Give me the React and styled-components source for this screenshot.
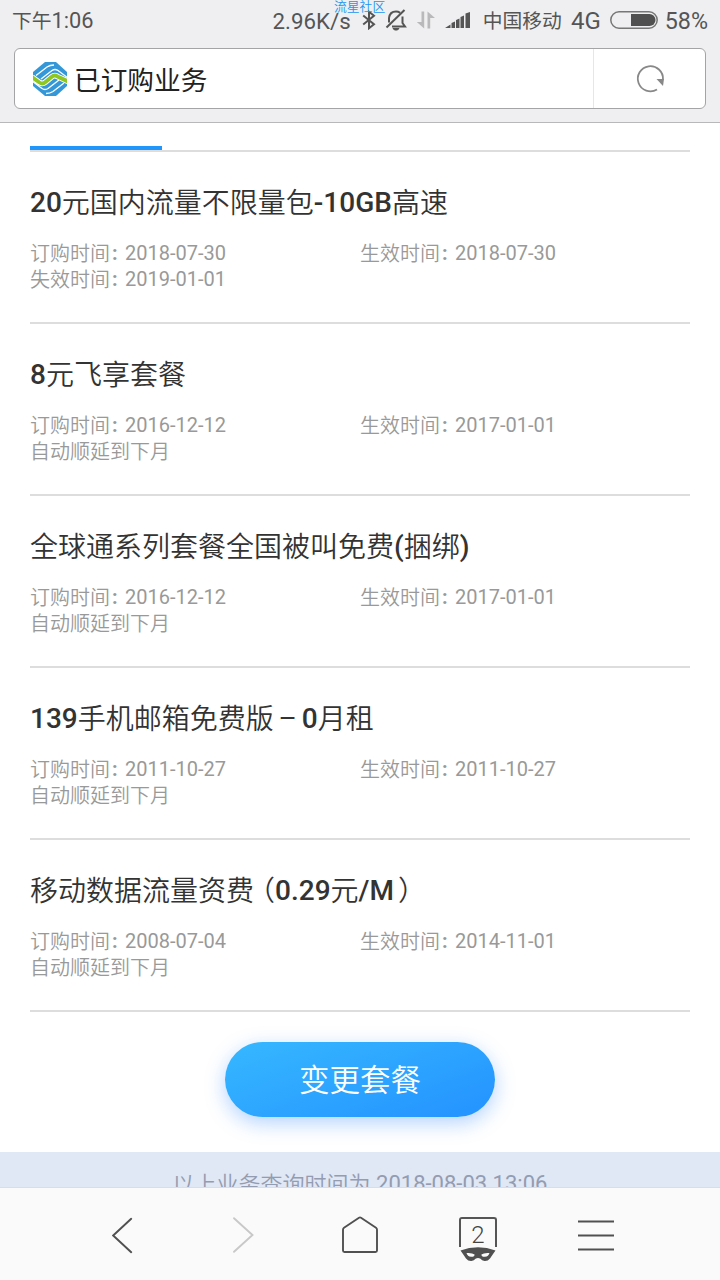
import React from 'react';
import styled, { createGlobalStyle } from 'styled-components';

const CJK = `'Noto Sans CJK SC', sans-serif`;

const subscriptions = [
    { title: '20元国内流量不限量包-10GB高速', ordered: '2018-07-30', effective: '2018-07-30', expires: '2019-01-01' },
    { title: '8元飞享套餐', ordered: '2016-12-12', effective: '2017-01-01' },
    { title: '全球通系列套餐全国被叫免费(捆绑)', ordered: '2016-12-12', effective: '2017-01-01' },
    { title: '139手机邮箱免费版 – 0月租', ordered: '2011-10-27', effective: '2011-10-27' },
    { title: '移动数据流量资费（0.29元/M）', ordered: '2008-07-04', effective: '2014-11-01' },
];

// latin runs are set heavier than the chinese characters around them
function MixedTitle({ text }) {
    return text.split(/([\x21-\x7e]+|[（）]| – )/).filter(Boolean).map((part, i) => {
        if (part === ' – ') return <Dash key={i}>–</Dash>;
        if (part === '（') return <Paren key={i} $gap={7}>{part}</Paren>;
        if (part === '）') return <Paren key={i} $gap={4}>{part}</Paren>;
        if (/^[\x21-\x7e]/.test(part)) return <Latin key={i}>{part}</Latin>;
        return <Han key={i}>{part}</Han>;
    });
}

function DateField({ label, value }) {
    return (
        <Field>
            <Han>{label}</Han><Colon>:</Colon>{value}
        </Field>
    );
}

function Subscription({ item }) {
    return (
        <Item>
            <ItemTitle><MixedTitle text={item.title} /></ItemTitle>
            <Fields>
                <DateField label="订购时间" value={item.ordered} />
                <DateField label="生效时间" value={item.effective} />
                {item.expires ? <DateField label="失效时间" value={item.expires} /> : <Field><Han>自动顺延到下月</Han></Field>}
            </Fields>
        </Item>
    );
}

function BluetoothIcon() {
    return (
        <svg width="14" height="20" viewBox="0 0 14 20" fill="none" stroke="#555" strokeWidth="2">
            <path d="M1.2 5.5 12 14.2 7 18.2V1.8L12 5.8 1.2 14.5" />
        </svg>
    );
}

function MutedIcon() {
    return (
        <svg width="22" height="22" viewBox="0 0 22 22" fill="none" stroke="#555" strokeWidth="2">
            <path d="M4 13.5V9C4.5 5 7 2.5 11 2.5c2 0 3 .5 4.2 1.3M17.5 7.5v6.5l2.5 3.5H7" />
            <path d="M1.5 18.5 19.5 1" />
            <path d="M8 19.5h6l-1.5 1.5h-3z" fill="#555" strokeWidth="1" />
        </svg>
    );
}

function DataIcon() {
    return (
        <svg width="20" height="20" viewBox="0 0 20 20" fill="#b9b9bb">
            <path d="M5.5 1.5H8.2V18.5L.8 12h4.7zM11.5 18.5V1.5L19 8h-4.8v10.5z" />
        </svg>
    );
}

function SignalIcon() {
    return (
        <svg width="26" height="18" viewBox="0 0 26 18" fill="#555">
            <path d="M0 17 5.5 13.5V17zM6.5 12l3.5-1.5V17H6.5zM11 9l3.5-1.5V17H11zM15.5 6 19 4.5V17h-3.5zM20.5 2.5 25 1v16h-4.5z" />
        </svg>
    );
}

function BatteryIcon() {
    return (
        <svg width="48" height="18" viewBox="0 0 48 18">
            <rect x=".8" y=".8" width="46.4" height="16.4" rx="8.2" fill="none" stroke="#777" strokeWidth="1.5" />
            <path d="M21 3h18.5a6 6 0 0 1 0 12H21z" fill="#505050" />
        </svg>
    );
}

function CarrierLogo() {
    return (
        <svg width="34" height="34" viewBox="0 0 34 34" fill="none">
            <clipPath id="logoShape"><path d="M12 0h11l11 10v14L23 34H12L0 24V10z" /></clipPath>
            <g clipPath="url(#logoShape)">
                <path d="M0 0h34v34H0z" fill="#3498d8" />
                <g stroke="#fff" strokeWidth="1.3">
                    <path d="M3 13.5 14 5q3-2 7-2" />
                    <path d="M8 17 19 8.500q3-2 6 0L35 16" />
                    <path d="M31 21 20 29.500q-3 2-7 2" />
                    <path d="M26 18 15 26.500q-3 2-6 0L-1 19" />
                </g>
                <path d="m-1 15 7.500 5.500q3 2 6-.5l6-5q3-2.500 6-.5L35 19.500" stroke="#fff" strokeWidth="5.800" />
                <path d="m-1 15 7.500 5.500q3 2 6-.5l6-5q3-2.500 6-.5L35 19.500" stroke="#8fc722" strokeWidth="3.900" />
            </g>
        </svg>
    );
}

function ReloadIcon() {
    return (
        <svg width="30" height="30" viewBox="0 0 30 30" fill="none">
            <path d="M22 25.5A12.6 12.6 0 1 1 28 15.5" stroke="#888" strokeWidth="1.8" />
            <path d="M21.5 15H29l-1 7z" fill="#888" />
        </svg>
    );
}

function ChevronIcon({ forward }) {
    return (
        <svg width="24" height="38" viewBox="0 0 24 38" fill="none" stroke={forward ? '#c8c8c8' : '#505050'} strokeWidth="1.9" strokeLinecap="round">
            <path d={forward ? 'M4 2.2 22.5 19 4 35.8' : 'M19.2 2.8 1.2 19.5 19.2 36.2'} />
        </svg>
    );
}

function HomeIcon() {
    return (
        <svg width="38" height="38" viewBox="0 0 38 38" fill="none" stroke="#505050" strokeWidth="1.9" strokeLinejoin="round">
            <path d="M18 1.7q1-.6 2 0l15 10q1 .7 1 2V34.5q0 1.5-1.5 1.5H3.5Q2 36 2 34.5V13.7q0-1.3 1-2z" />
        </svg>
    );
}

function MaskIcon() {
    return (
        <svg width="36" height="15" viewBox="0 0 36 15">
            <path
                fill="#505050"
                fillRule="evenodd"
                d="M.5 3.500Q9 .2 18 .2T35.500 3.500Q33 7 30 11.500q-2.300 2.800-5.500 2.500-2.600-.2-4-2.300Q18 10.500 15.500 11.700q-1.400 2.100-4 2.300Q8.300 14.300 6 11.500 3 7 .5 3.500ZM6.500 6q1 3.600 4.500 3.800 3.600.2 3.600-2.300Q12 5.500 6.500 6Zm23 0q-5.500-.5-8.100 1.500 0 2.500 3.600 2.300 3.500-.2 4.500-3.800Z"
            />
        </svg>
    );
}

function MenuIcon() {
    return (
        <svg width="36" height="32" viewBox="0 0 36 32" stroke="#505050" strokeWidth="2">
            <path d="M0 2.4h36M0 16.4h36M0 30.4h36" />
        </svg>
    );
}

export default function App() {
    return (
        <Screen>
            <GlobalStyle />
            <BrowserHeader>
                <StatusBar>
                    <Clock><Carrier>下午</Carrier>1:06</Clock>
                    <StatusIcons>
                        <StatusText $size={22.3}>2.96K/s</StatusText>
                        <Glyphs>
                            <BluetoothIcon />
                            <MutedIcon />
                            <DataIcon />
                            <SignalIcon />
                        </Glyphs>
                        <Carrier $drop>中国移动</Carrier>
                        <StatusText $size={24}>4G</StatusText>
                        <BatteryIcon />
                        <Percent $size={23.3}>58%</Percent>
                    </StatusIcons>
                </StatusBar>
                <Watermark>流星社区</Watermark>
                <AddressBar>
                    <PageName><CarrierLogo />已订购业务</PageName>
                    <ReloadButton aria-label="刷新"><ReloadIcon /></ReloadButton>
                </AddressBar>
            </BrowserHeader>
            <Page>
                <TabLine><ActiveTab /></TabLine>
                {subscriptions.map((item) => <Subscription key={item.title} item={item} />)}
                <ChangeButton>变更套餐</ChangeButton>
            </Page>
            <QueryTime><Han>以上业务查询时间为</Han> 2018-08-03 13:06</QueryTime>
            <Toolbar>
                <ToolButton><ChevronIcon /></ToolButton>
                <ToolButton><ChevronIcon forward /></ToolButton>
                <ToolButton><HomeIcon /></ToolButton>
                <ToolButton>
                    <Windows>
                        <WindowCount>2</WindowCount>
                        <MaskIcon />
                    </Windows>
                </ToolButton>
                <ToolButton><MenuIcon /></ToolButton>
            </Toolbar>
        </Screen>
    );
}

const GlobalStyle = createGlobalStyle`
  * { box-sizing: border-box; }
  body { margin: 0; }
  svg { display: block; flex: none; }
  button { border: 0; padding: 0; background: none; font: inherit; color: inherit; }
`;

const Screen = styled.div`
  display: flex;
  flex-direction: column;
  width: 720px;
  height: 1280px;
  overflow: hidden;
  background: #fff;
  font-family: Roboto, ${CJK};
  white-space: nowrap;
`;

const BrowserHeader = styled.header`
  position: relative;
  flex: none;
  height: 123px;
  padding: 0 14px;
  background: #efeff1;
  border-bottom: 1px solid #b8b8ba;
`;

const StatusBar = styled.div`
  display: flex;
  align-items: center;
  justify-content: space-between;
  height: 40px;
  margin: 0 -2px 8px;
  color: #555;
`;

const StatusText = styled.span`
  padding-top: 2px;
  font-size: ${(props) => props.$size}px;
  line-height: 40px;
`;

const Percent = styled(StatusText)`
  margin-left: -2px;
`;

const Clock = styled.span`
  padding-top: 2px;
  font-size: 21.8px;
  line-height: 40px;
`;

const StatusIcons = styled.div`
  display: flex;
  align-items: center;
  gap: 9px;
`;

const Glyphs = styled.span`
  display: flex;
  align-items: center;
  gap: 9px;
  margin-right: 3px;
  margin-left: 2px;
`;

const Carrier = styled.span`
  padding-top: ${(props) => (props.$drop ? '3px' : '0')};
  font-size: 19.8px;
  line-height: 40px;
`;

const Watermark = styled.span`
  position: absolute;
  top: -2px;
  left: 334px;
  font: 350 12.8px/16px ${CJK};
  color: #2196f3;
`;

const AddressBar = styled.div`
  display: flex;
  height: 61px;
  background: #fff;
  border: 1px solid #a4a4a6;
  border-radius: 6px;
`;

const PageName = styled.div`
  flex: 1;
  display: flex;
  align-items: center;
  gap: 7px;
  padding-left: 18px;
  font-size: 26.7px;
  color: #222;
`;

const ReloadButton = styled.button`
  display: flex;
  align-items: center;
  justify-content: center;
  width: 112px;
  border-left: 1px solid #e6e6e6;
`;

const Page = styled.main`
  display: flex;
  flex-direction: column;
  flex: none;
  height: 1029px;
  padding: 23px 30px 0;
`;

const TabLine = styled.div`
  height: 6px;
  border-bottom: 2px solid #ddd;
`;

const ActiveTab = styled.div`
  width: 132px;
  height: 4px;
  background: #2196fa;
`;

const Item = styled.section`
  height: 172px;
  padding-top: 31px;
  border-bottom: 2px solid #ddd;
`;

const ItemTitle = styled.h2`
  height: 40px;
  margin: 0 0 17px;
  font-size: 28px;
  font-weight: 350;
  line-height: 40px;
  color: #333;
`;

const Latin = styled.span`
  font-weight: 500;
`;

const Han = styled.span`
  font-family: ${CJK};
  font-weight: 350;
  line-height: 1;
  vertical-align: -1px;
`;

const Dash = styled.span`
  display: inline-block;
  width: 28px;
  font-weight: 400;
  text-align: center;
`;

const Paren = styled(Han)`
  margin-left: ${(props) => props.$gap}px;
  font-feature-settings: 'halt';
`;

const Fields = styled.div`
  display: grid;
  grid-template-columns: 1fr 1fr;
  grid-auto-rows: 26px;
`;

const Field = styled.div`
  font-size: 20px;
  line-height: 26px;
  color: #999;
`;

const Colon = styled.span`
  display: inline-block;
  width: 15px;
  padding-left: 2px;
  font-weight: 700;
`;

const ChangeButton = styled.button`
  align-self: center;
  flex: none;
  width: 270px;
  height: 75px;
  margin-top: 30px;
  padding-bottom: 3px;
  border-radius: 38px;
  background: linear-gradient(160deg, #36b8ff, #2492ff);
  box-shadow: 0 6px 20px rgba(36, 130, 255, 0.35);
  color: #fff;
  font-size: 30.5px;
  font-weight: 350;
`;

const QueryTime = styled.footer`
  flex: none;
  height: 35px;
  padding-top: 17px;
  overflow: hidden;
  background: #e0e7f5;
  color: #939cb0;
  font-size: 22px;
  line-height: 30px;
  text-align: center;
`;

const Toolbar = styled.nav`
  display: flex;
  flex: none;
  justify-content: center;
  height: 93px;
  border-top: 1px solid #dcdce2;
  background: #fafafa;
`;

const ToolButton = styled.button`
  display: flex;
  align-items: center;
  justify-content: center;
  width: 118px;
  height: 94px;
`;

const Windows = styled.span`
  display: flex;
  flex-direction: column;
  align-items: center;
  padding-top: 8px;
`;

const WindowCount = styled.span`
  width: 38px;
  height: 30px;
  border: 2px solid #555;
  border-bottom: 0;
  border-radius: 3px 3px 0 0;
  font-size: 24px;
  font-weight: 300;
  line-height: 32px;
  color: #444;
`;
